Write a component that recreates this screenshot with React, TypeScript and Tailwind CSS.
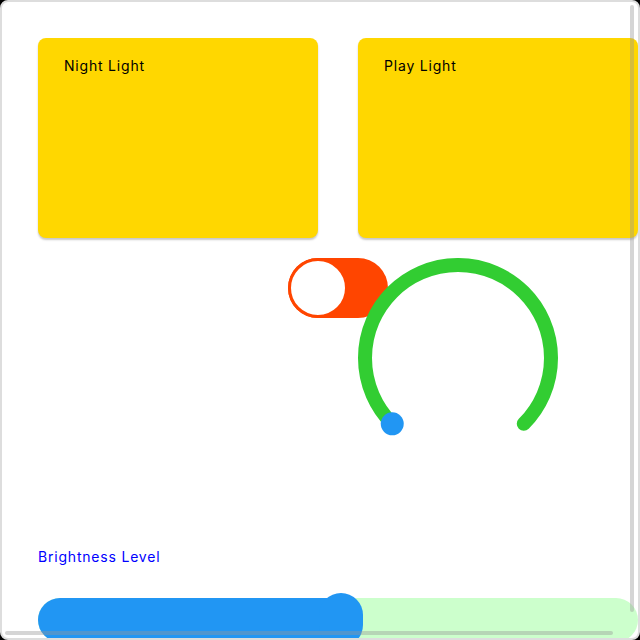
import React from "react";

function Card({ title }: { title: string }) {
  return (
    <div className="w-[280px] h-[200px] shrink-0 rounded-lg bg-[#FFD700] pt-[18px] pl-[26px] shadow-[0_2px_2px_rgba(0,0,0,0.22)]">
      <div className="text-[14px] leading-5 tracking-[0.8px] text-black">{title}</div>
    </div>
  );
}

function Toggle() {
  return (
    <div className="w-[100px] h-[60px] shrink-0 rounded-full bg-[#FF4500] flex items-center">
      <div className="w-[60px] h-[60px] rounded-full bg-white border-[3px] border-[#FF4500]" />
    </div>
  );
}

function Dial() {
  return (
    <svg width="200" height="200" viewBox="0 0 200 200" className="shrink-0 -ml-[30px] relative">
      <path
        d="M 34.24 165.76 A 93 93 0 1 1 165.76 165.76"
        fill="none"
        stroke="#32CD32"
        strokeWidth="14"
        strokeLinecap="round"
      />
      <circle cx="34.24" cy="165.76" r="11.5" fill="#2196F3" />
    </svg>
  );
}

function Slider({ value }: { value: number }) {
  return (
    <div className="relative w-[600px] h-[44px] rounded-full bg-[#CCFFCC]">
      <div className="absolute left-0 top-0 h-full rounded-l-full bg-[#2196F3]" style={{ width: `${value}%` }} />
      <div
        className="absolute top-[-5px] w-[44px] h-[54px] -ml-[22px] rounded-full bg-[#2196F3]"
        style={{ left: `${value}%` }}
      />
    </div>
  );
}

export default function App() {
  return (
    <div className="w-[640px] h-[640px] bg-black" style={{ fontFamily: "Inter, 'Noto Sans', sans-serif" }}>
      <div className="relative w-full h-full rounded-lg border-2 border-[#dddddd] bg-white overflow-hidden">
        <div className="p-9 flex flex-col">
          <div className="flex gap-10">
            <Card title="Night Light" />
            <Card title="Play Light" />
          </div>
          <div className="flex items-start mt-5">
            <div className="ml-[250px]">
              <Toggle />
            </div>
            <Dial />
          </div>
          <div className="mt-[89px] text-[14px] leading-5 tracking-[0.8px] text-[#0000FF]">Brightness Level</div>
          <div className="mt-[31px]">
            <Slider value={50.5} />
          </div>
        </div>
        <div className="absolute right-[4px] top-[3px] w-[4px] h-[607px] rounded-full bg-[rgba(150,150,150,0.4)]" />
        <div className="absolute left-[3px] bottom-[3px] h-[4px] w-[608px] rounded-full bg-[rgba(150,150,150,0.4)]" />
      </div>
    </div>
  );
}
